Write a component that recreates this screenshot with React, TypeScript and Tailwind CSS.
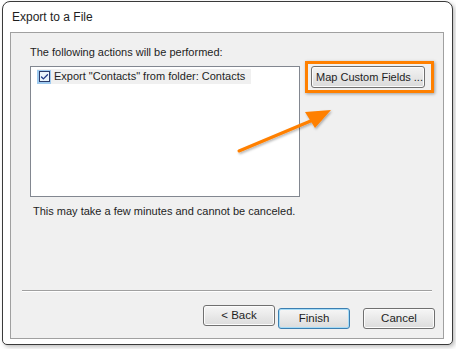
import { Check } from 'lucide-react'

const font = { fontFamily: '"Liberation Sans", Arial, sans-serif' }

const DialogButton = ({ label, primary }: { label: string; primary?: boolean }) => (
  <button
    className={`h-[21px] w-[72px] rounded-[3px] border text-[11.5px] text-[#1e1e1e] bg-gradient-to-b from-[#f6f6f6] to-[#dcdcdc] ${
      primary ? 'border-[#3c7fb1] shadow-[inset_0_0_0_1px_#a6dcf7]' : 'border-[#707070] shadow-[inset_0_0_0_1px_#fcfcfc]'
    }`}
  >
    {label}
  </button>
)

export default function App() {
  return (
    <div className="w-[456px] h-[349px] bg-white pl-[2px] pt-[1px]" style={font}>
      <div className="relative w-[451px] h-[344px] border border-[#3a3a3a] rounded-t-[8px] rounded-b-[5px] bg-white shadow-[2px_2px_4px_rgba(0,0,0,0.25)] flex flex-col">
        <div className="h-[30px] pl-[9px] flex items-center text-[12px] text-[#1e1e1e]">
          Export to a File
        </div>
        <div className="ml-[7px] w-[434px] h-[307px] border border-[#a0a0a0] bg-[#f0f0f0] flex flex-col">
          <div className="pl-[19px] pt-[11px] text-[11px] leading-[16px] text-[#1e1e1e]">
            The following actions will be performed:
          </div>
          <div className="flex mt-[6px] pl-[19px]">
            <div className="w-[270px] h-[131px] border border-[#828790] bg-white p-[1px]">
              <div className="ml-[5px] mt-[1px] flex items-center w-fit h-[15px] bg-[#f0f0f0] pr-[6px]">
                <div className="w-[14px] h-[14px] bg-[#9fcbf0] flex items-center justify-center">
                  <div className="w-[11px] h-[11px] border border-[#2a3b6a] bg-[#eaf4fb] flex items-center justify-center">
                    <Check size={10} strokeWidth={3.5} className="text-[#1f3a86]" />
                  </div>
                </div>
                <span className="ml-[3px] text-[11px] text-[#1e1e1e] whitespace-nowrap">
                  Export "Contacts" from folder: Contacts
                </span>
              </div>
            </div>
            <div className="ml-[5px] -mt-[5px]">
              <div className="w-[129px] h-[32px] border-[3px] border-[#ff8000] shadow-[1px_1px_3px_rgba(0,0,0,0.35)] flex items-center pl-[3px]">
                <button className="h-[22px] w-[114px] rounded-[3px] border border-[#707070] bg-gradient-to-b from-[#f3f3f3] to-[#dadada] text-[11px] text-[#1e1e1e] text-left pl-[4px] whitespace-nowrap shadow-[inset_0_0_0_1px_#fcfcfc]">
                  Map Custom Fields ...
                </button>
              </div>
            </div>
          </div>
          <div className="pl-[22px] mt-[6px] text-[11px] leading-[16px] text-[#1e1e1e]">
            This may take a few minutes and cannot be canceled.
          </div>
          <div className="mx-[11px] mt-[71px] h-[1px] bg-[#a0a0a0] border-b border-white box-content" />
          <div className="flex justify-end pr-[8px] mt-[13px]">
            <DialogButton label="< Back" />
            <div className="ml-[3px]">
              <DialogButton label="Finish" primary />
            </div>
            <div className="ml-[13px]">
              <DialogButton label="Cancel" />
            </div>
          </div>
        </div>
        <svg className="absolute left-[230px] top-[100px]" width="110" height="60" viewBox="0 0 110 60">
          <defs>
            <filter id="sh" x="-20%" y="-20%" width="140%" height="140%">
              <feDropShadow dx="1" dy="1.5" stdDeviation="1.2" floodColor="#000" floodOpacity="0.3" />
            </filter>
          </defs>
          <g filter="url(#sh)">
            <line x1="6" y1="49" x2="80" y2="18" stroke="#ff8000" strokeWidth="3" strokeLinecap="round" />
            <polygon points="98,8 72,10 82,26" fill="#ff8000" />
          </g>
        </svg>
      </div>
    </div>
  )
}
